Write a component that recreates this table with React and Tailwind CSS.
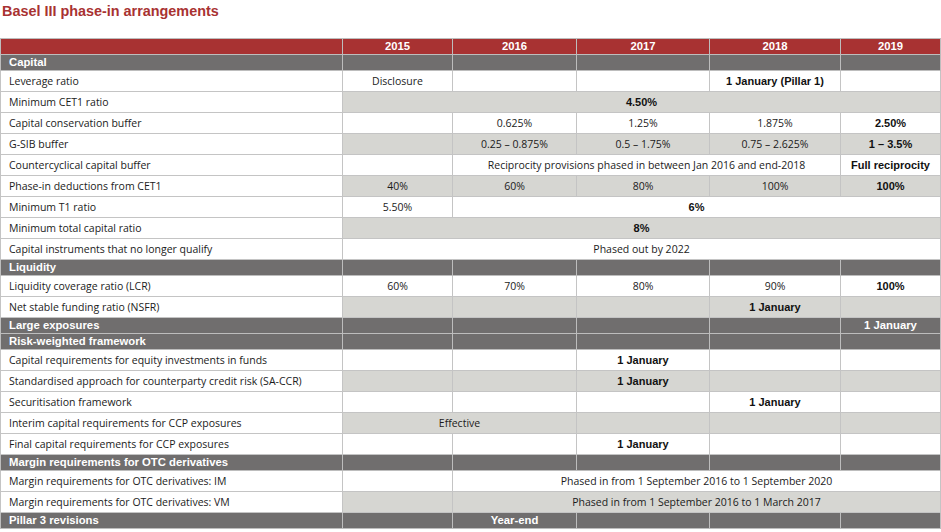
import React from 'react';

const B = (text) => ({ text, bold: true });
const S = (text, span, bold = false) => ({ text, span, bold });

const rows = [
  { section: 'Capital', cells: ['', '', '', '', ''] },
  { label: 'Leverage ratio', cells: ['Disclosure', '', '', B('1 January (Pillar 1)'), ''] },
  { label: 'Minimum CET1 ratio', shade: true, cells: [S('4.50%', 5, true)] },
  { label: 'Capital conservation buffer', cells: ['', '0.625%', '1.25%', '1.875%', B('2.50%')] },
  { label: 'G-SIB buffer', shade: true, cells: ['', '0.25 – 0.875%', '0.5 – 1.75%', '0.75 – 2.625%', B('1 – 3.5%')] },
  {
    label: 'Countercyclical capital buffer',
    cells: ['', S('Reciprocity provisions phased in between Jan 2016 and end-2018', 3), B('Full reciprocity')],
  },
  { label: 'Phase-in deductions from CET1', shade: true, cells: ['40%', '60%', '80%', '100%', B('100%')] },
  { label: 'Minimum T1 ratio', cells: ['5.50%', S('6%', 4, true)] },
  { label: 'Minimum total capital ratio', shade: true, cells: [S('8%', 5, true)] },
  { label: 'Capital instruments that no longer qualify', cells: [S('Phased out by 2022', 5)] },
  { section: 'Liquidity', cells: ['', '', '', '', ''] },
  { label: 'Liquidity coverage ratio (LCR)', cells: ['60%', '70%', '80%', '90%', B('100%')] },
  { label: 'Net stable funding ratio (NSFR)', shade: true, cells: ['', '', '', B('1 January'), ''] },
  { section: 'Large exposures', cells: ['', '', '', '', B('1 January')] },
  { section: 'Risk-weighted framework', cells: ['', '', '', '', ''] },
  { label: 'Capital requirements for equity investments in funds', cells: ['', '', B('1 January'), '', ''] },
  { label: 'Standardised approach for counterparty credit risk (SA-CCR)', shade: true, cells: ['', '', B('1 January'), '', ''] },
  { label: 'Securitisation framework', cells: ['', '', '', B('1 January'), ''] },
  { label: 'Interim capital requirements for CCP exposures', shade: true, cells: [S('Effective', 2), '', '', ''] },
  { label: 'Final capital requirements for CCP exposures', cells: ['', '', B('1 January'), '', ''] },
  { section: 'Margin requirements for OTC derivatives', cells: ['', '', '', '', ''] },
  {
    label: 'Margin requirements for OTC derivatives: IM',
    cells: ['', S('Phased in from 1 September 2016 to 1 September 2020', 4)],
  },
  {
    label: 'Margin requirements for OTC derivatives: VM',
    shade: true,
    cells: ['', S('Phased in from 1 September 2016 to 1 March 2017', 4)],
  },
  { section: 'Pillar 3 revisions', cells: ['', B('Year-end'), '', '', ''] },
];

const years = ['2015', '2016', '2017', '2018', '2019'];

const regular = "font-['Segoe_UI','Open_Sans',sans-serif] text-[10.5px] font-normal text-[#1b1b1b]";
const bold = "font-['Liberation_Sans',Arial,sans-serif] text-[11px] font-bold text-[#111]";
const sectionText = "font-['Liberation_Sans',Arial,sans-serif] text-[11.3px] font-bold text-white";

const norm = (c) => (typeof c === 'string' ? { text: c } : c);

const SectionRow = ({ row }) => (
  <tr className="h-[16px] bg-[#706e6e]">
    <td className={`border border-[#bdbdbd] pl-[8px] leading-none ${sectionText}`}>{row.section}</td>
    {row.cells.map((c, i) => {
      const cell = norm(c);
      return (
        <td key={i} colSpan={cell.span || 1} className={`border border-[#bdbdbd] text-center leading-none ${sectionText}`}>
          {cell.text}
        </td>
      );
    })}
  </tr>
);

const DataRow = ({ row }) => (
  <tr className="h-[21px]">
    <td className={`border border-[#c4c4c4] bg-white pl-[8px] leading-none ${regular}`}>{row.label}</td>
    {row.cells.map((c, i) => {
      const cell = norm(c);
      return (
        <td
          key={i}
          colSpan={cell.span || 1}
          className={`border border-[#c4c4c4] text-center leading-none ${row.shade ? 'bg-[#d6d6d2]' : 'bg-white'} ${
            cell.bold ? bold : regular
          }`}
        >
          {cell.text}
        </td>
      );
    })}
  </tr>
);

const App = () => {
  return (
    <div className="w-[941px] h-[532px] bg-white overflow-hidden">
      <div className="h-[38px] pl-[2px] pt-[2px]">
        <h1 className="font-['Segoe_UI','Liberation_Sans',Arial,sans-serif] text-[14.4px] font-bold leading-[18px] text-[#a83232]">
          Basel III phase-in arrangements
        </h1>
      </div>
      <table className="w-[940px] table-fixed border-collapse">
        <colgroup>
          <col className="w-[342px]" />
          <col className="w-[110px]" />
          <col className="w-[124px]" />
          <col className="w-[133px]" />
          <col className="w-[131px]" />
          <col className="w-[100px]" />
        </colgroup>
        <thead>
          <tr className="h-[16px] bg-[#a83232]">
            <th className="border border-[#bdbdbd]" />
            {years.map((y) => (
              <th key={y} className={`border border-[#bdbdbd] text-center leading-none ${sectionText}`}>
                {y}
              </th>
            ))}
          </tr>
        </thead>
        <tbody>
          {rows.map((row, i) =>
            row.section ? <SectionRow key={i} row={row} /> : <DataRow key={i} row={row} />
          )}
        </tbody>
      </table>
    </div>
  );
};

export default App;
